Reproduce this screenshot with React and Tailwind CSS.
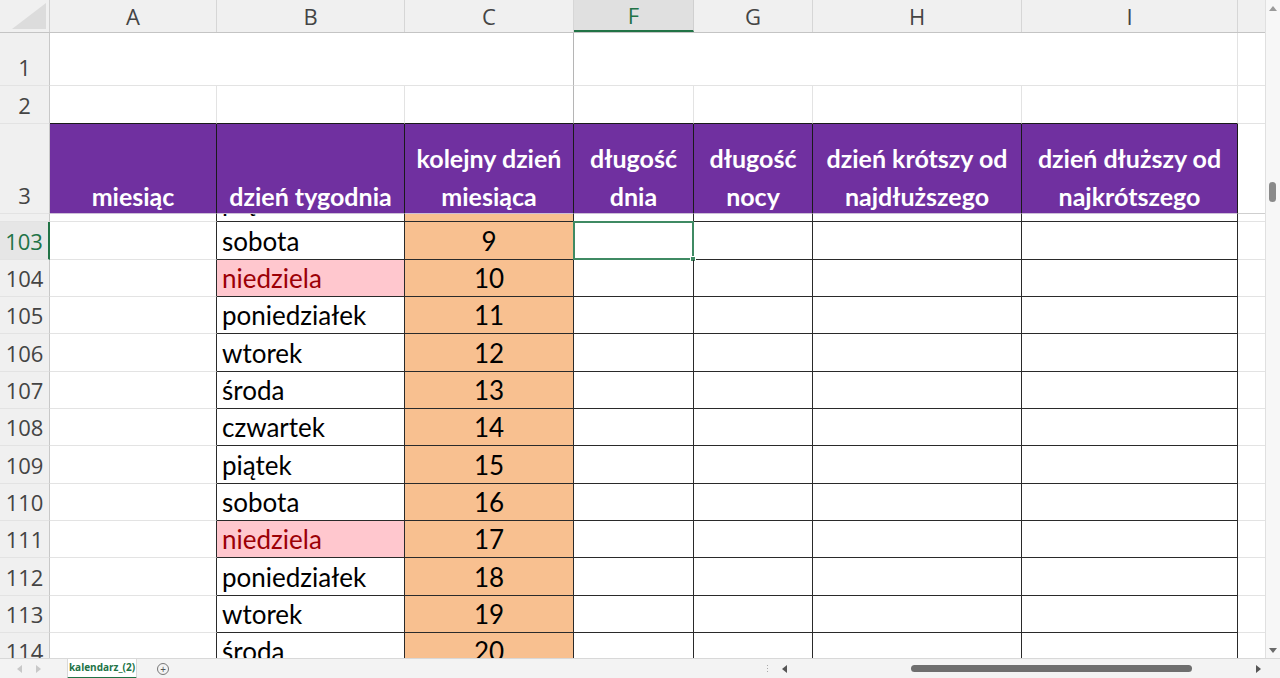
import React from "react";

const rows = [
  { n: 103, day: "sobota", d: 9, h: "h-[38px]" },
  { n: 104, day: "niedziela", d: 10, h: "h-[37px]", sun: true },
  { n: 105, day: "poniedziałek", d: 11, h: "h-[37px]" },
  { n: 106, day: "wtorek", d: 12, h: "h-[38px]" },
  { n: 107, day: "środa", d: 13, h: "h-[37px]" },
  { n: 108, day: "czwartek", d: 14, h: "h-[37px]" },
  { n: 109, day: "piątek", d: 15, h: "h-[38px]" },
  { n: 110, day: "sobota", d: 16, h: "h-[37px]" },
  { n: 111, day: "niedziela", d: 17, h: "h-[37px]", sun: true },
  { n: 112, day: "poniedziałek", d: 18, h: "h-[38px]" },
  { n: 113, day: "wtorek", d: 19, h: "h-[37px]" },
  { n: 114, day: "środa", d: 20, h: "h-[37px]" },
];

const cols = ["A", "B", "C", "F", "G", "H", "I"];
const colW = ["w-[167px]", "w-[188px]", "w-[169px]", "w-[120px]", "w-[119px]", "w-[209px]", "w-[216px]"];

const uiFont = "font-['Open_Sans','Noto_Sans',sans-serif]";
const cellFont = "font-['Lato','Open_Sans',sans-serif]";

// small triangle arrow for scroll bars
function Arrow({ dir, color }) {
  const pts = {
    left: "5,0 5,8 0,4",
    right: "0,0 0,8 5,4",
    up: "0,5 8,5 4,0",
    down: "0,0 8,0 4,5",
  }[dir];
  const vertical = dir === "up" || dir === "down";
  return (
    <svg width={vertical ? 8 : 5} height={vertical ? 5 : 8} viewBox={vertical ? "0 0 8 5" : "0 0 5 8"}>
      <polygon points={pts} fill={color} />
    </svg>
  );
}

function RowHead({ label, h, active }) {
  return (
    <div
      className={`w-[50px] shrink-0 ${h} flex items-end justify-center pb-[3px] text-[22px] leading-[30px] ${uiFont} border-b border-[#e3e3e3] ${
        active
          ? "bg-[#e6e6e6] text-[#217346] border-r-2 border-r-[#217346]"
          : "bg-[#f0f0f0] text-[#444] border-r border-r-[#c8c8c8]"
      }`}
    >
      {label}
    </div>
  );
}

function DataRow({ r, first }) {
  return (
    <div className={`flex ${r.h}`}>
      <RowHead label={r.n} h={r.h} active={first} />
      <div className="w-[167px] shrink-0 border-b border-[#e3e3e3] border-r border-r-[#2a2a2a]" />
      <div
        className={`w-[188px] shrink-0 border-r border-b border-[#2a2a2a] flex items-center pl-[5px] pt-[1px] text-[26px] ${cellFont} ${
          r.sun ? "bg-[#ffc7ce] text-[#9c0006]" : "text-black"
        }`}
      >
        {r.day}
      </div>
      <div className={`w-[169px] shrink-0 border-r border-b border-[#2a2a2a] bg-[#f8c090] flex items-center justify-center pt-[1px] text-[26px] ${cellFont} text-black`}>
        {r.d}
      </div>
      <div className="w-[120px] shrink-0 border-r border-b border-[#2a2a2a] relative">
        {first && (
          <div className="absolute -left-px -top-px -right-px -bottom-px border-2 border-[#3f8a63]">
            <div className="absolute -right-[4px] -bottom-[4px] w-[6px] h-[6px] bg-[#3f8a63] border border-white" />
          </div>
        )}
      </div>
      <div className="w-[119px] shrink-0 border-r border-b border-[#2a2a2a]" />
      <div className="w-[209px] shrink-0 border-r border-b border-[#2a2a2a]" />
      <div className="w-[216px] shrink-0 border-r border-b border-[#2a2a2a]" />
      <div className="w-[27px] shrink-0 border-b border-[#e3e3e3]" />
    </div>
  );
}

function HeadCell({ w, children }) {
  return (
    <div
      className={`${w} shrink-0 bg-[#7030a0] border-r border-[#1a1a1a] border-b border-b-[#cdbfd8] flex flex-col justify-end items-center text-center text-white font-bold text-[25px] leading-[38px] ${cellFont}`}
    >
      <div className="-mb-[2px]">{children}</div>
    </div>
  );
}

export default function App() {
  return (
    <div className="w-[1280px] h-[678px] bg-white overflow-hidden flex flex-col">
      <div className="flex h-[658px]">
        <div className="w-[1265px] h-[658px] overflow-hidden flex flex-col">
          {/* column headers */}
          <div className="flex h-[33px] shrink-0 bg-[#f0f0f0] border-b border-[#c4c4c4]">
            <div className="w-[50px] shrink-0 relative border-r border-[#d0d0d0]">
              <svg className="absolute right-[3px] bottom-[3px]" width="40" height="26" viewBox="0 0 40 26">
                <polygon points="40,0 40,26 6,26" fill="#dcdcdc" />
              </svg>
            </div>
            {cols.map((c, i) => (
              <div
                key={c}
                className={`${colW[i]} shrink-0 flex items-center justify-center text-[22px] ${uiFont} ${
                  c === "F"
                    ? "bg-[#e0e0e0] text-[#217346] border-b-2 border-[#217346] border-r border-r-[#d0d0d0]"
                    : "text-[#444] border-r border-[#d6d6d6]"
                }`}
              >
                {c}
              </div>
            ))}
            <div className="w-[27px] shrink-0" />
          </div>

          {/* row 1 */}
          <div className="flex h-[53px] shrink-0">
            <RowHead label="1" h="h-[53px]" />
            <div className="w-[524px] shrink-0 border-b border-[#e3e3e3] border-r border-r-[#b5b5b5]" />
            <div className="w-[664px] shrink-0 border-b border-[#e3e3e3] border-r" />
            <div className="w-[27px] shrink-0 border-b border-[#e3e3e3]" />
          </div>

          {/* row 2 */}
          <div className="flex h-[38px] shrink-0">
            <RowHead label="2" h="h-[38px]" />
            <div className="w-[167px] shrink-0 border-b border-[#1a1a1a] border-r border-r-[#e3e3e3]" />
            <div className="w-[188px] shrink-0 border-b border-[#1a1a1a] border-r border-r-[#e3e3e3]" />
            <div className="w-[169px] shrink-0 border-b border-[#1a1a1a] border-r border-r-[#b5b5b5]" />
            <div className="w-[120px] shrink-0 border-b border-[#1a1a1a] border-r border-r-[#e3e3e3]" />
            <div className="w-[119px] shrink-0 border-b border-[#1a1a1a] border-r border-r-[#e3e3e3]" />
            <div className="w-[209px] shrink-0 border-b border-[#1a1a1a] border-r border-r-[#e3e3e3]" />
            <div className="w-[216px] shrink-0 border-b border-[#1a1a1a] border-r border-r-[#e3e3e3]" />
            <div className="w-[27px] shrink-0 border-b border-[#e3e3e3]" />
          </div>

          {/* row 3 - table header */}
          <div className="flex h-[90px] shrink-0">
            <RowHead label="3" h="h-[90px]" />
            <HeadCell w="w-[167px]">miesiąc</HeadCell>
            <HeadCell w="w-[188px]">dzień tygodnia</HeadCell>
            <HeadCell w="w-[169px]">kolejny dzień<br />miesiąca</HeadCell>
            <HeadCell w="w-[120px]">długość<br />dnia</HeadCell>
            <HeadCell w="w-[119px]">długość<br />nocy</HeadCell>
            <HeadCell w="w-[209px]">dzień krótszy od<br />najdłuższego</HeadCell>
            <HeadCell w="w-[216px]">dzień dłuższy od<br />najkrótszego</HeadCell>
            <div className="w-[27px] shrink-0 border-b border-[#cfcfcf]" />
          </div>

          {/* partially scrolled row 102 */}
          <div className="flex h-[8px] shrink-0 overflow-hidden">
            <div className="w-[50px] shrink-0 bg-[#f0f0f0] border-r border-[#c8c8c8] border-b border-b-[#e3e3e3]" />
            <div className="w-[167px] shrink-0 border-r border-[#2a2a2a] border-b border-b-[#e3e3e3]" />
            <div className="w-[188px] shrink-0 border-r border-b border-[#2a2a2a] overflow-hidden relative">
              <div className={`absolute left-[5px] bottom-[1px] h-[37px] flex items-center text-[26px] ${cellFont} text-black`}>
                piątek
              </div>
            </div>
            <div className="w-[169px] shrink-0 border-r border-b border-[#2a2a2a] bg-[#f8c090]" />
            <div className="w-[120px] shrink-0 border-r border-b border-[#2a2a2a]" />
            <div className="w-[119px] shrink-0 border-r border-b border-[#2a2a2a]" />
            <div className="w-[209px] shrink-0 border-r border-b border-[#2a2a2a]" />
            <div className="w-[216px] shrink-0 border-r border-b border-[#2a2a2a]" />
            <div className="w-[27px] shrink-0 border-b border-[#e3e3e3]" />
          </div>

          {rows.map((r, i) => (
            <DataRow key={r.n} r={r} first={i === 0} />
          ))}
        </div>

        {/* vertical scrollbar */}
        <div className="w-[15px] h-[658px] bg-[#f7f7f7] border-l border-[#e0e0e0] flex flex-col items-center justify-between pt-[6px] pb-[5px]">
          <Arrow dir="up" color="#9a9a9a" />
          <div className="flex-1 w-full relative">
            <div className="absolute left-[3px] top-[171px] w-[7px] h-[20px] rounded-full bg-[#8a8a8a]" />
          </div>
          <Arrow dir="down" color="#6a6a6a" />
        </div>
      </div>

      {/* bottom bar */}
      <div className="h-[20px] bg-[#f3f3f3] border-t border-[#d8d8d8] flex items-center">
        <div className="ml-[17px]"><Arrow dir="left" color="#c8c8c8" /></div>
        <div className="ml-[14px]"><Arrow dir="right" color="#c8c8c8" /></div>
        <div className={`ml-[26px] h-[20px] w-[70px] bg-white border-x border-[#d8d8d8] border-b-2 border-b-[#217346] flex items-center justify-center text-[10px] font-bold text-[#217346] ${uiFont}`}>
          kalendarz_(2)
        </div>
        <div className="ml-[20px] w-[12px] h-[12px] rounded-full border border-[#777] flex items-center justify-center text-[10px] leading-none text-[#555]">
          +
        </div>
        <div className="ml-[598px] flex flex-col gap-[2px]">
          <div className="w-[1px] h-[1px] bg-[#aaa]" />
          <div className="w-[1px] h-[1px] bg-[#aaa]" />
          <div className="w-[1px] h-[1px] bg-[#aaa]" />
        </div>
        <div className="ml-[14px]"><Arrow dir="left" color="#555" /></div>
        <div className="ml-[124px] w-[281px] h-[7px] rounded-full bg-[#6e6e6e]" />
        <div className="ml-[64px]"><Arrow dir="right" color="#555" /></div>
      </div>
    </div>
  );
}
